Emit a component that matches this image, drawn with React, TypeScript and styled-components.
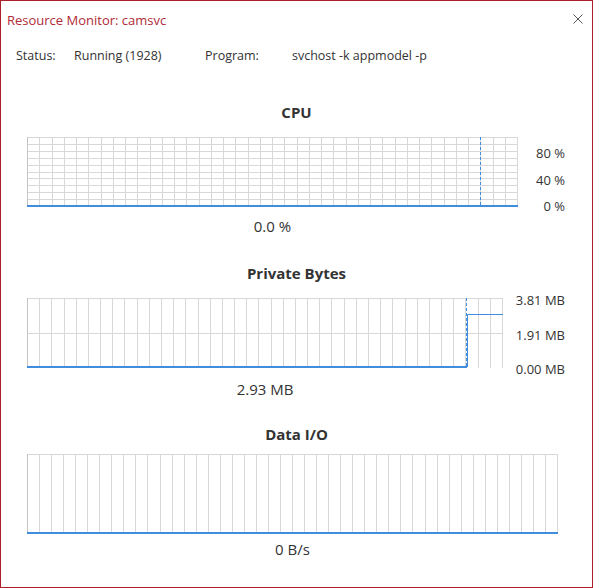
import React from 'react';
import styled, { createGlobalStyle } from 'styled-components';

const GlobalStyle = createGlobalStyle`
  html, body { margin: 0; padding: 0; background: #fff; }
  body {
    font-family: "Open Sans", "Noto Sans", "Liberation Sans", sans-serif;
    color: #333;
  }
`;

const Window = styled.div`
  box-sizing: border-box;
  width: 593px;
  height: 588px;
  border: 1px solid #ae1f2a;
  background: #fff;
  display: flex;
  flex-direction: column;
`;

const TitleBar = styled.div`
  height: 36px;
  display: flex;
  align-items: center;
  justify-content: space-between;
  padding: 0 9px 0 6px;
`;

const TitleText = styled.div`
  font-size: 13px;
  line-height: 18px;
  margin-top: 1px;
  color: #b02a36;
`;

const CloseButton = styled.div`
  width: 10px;
  height: 10px;
  display: flex;
  margin-top: -1px;
`;

const InfoRow = styled.div`
  margin-top: 10px;
  height: 18px;
  display: flex;
  align-items: center;
  padding-left: 15px;
  font-size: 12.5px;
  line-height: 18px;
  color: #333;
`;

const InfoCell = styled.div<{ $w?: number }>`
  ${(p) => (p.$w ? `width: ${p.$w}px;` : '')}
  white-space: nowrap;
`;

const Section = styled.section<{ $mt: number }>`
  margin-top: ${(p) => p.$mt}px;
  display: flex;
  flex-direction: column;
`;

const Heading = styled.h2`
  margin: 0;
  font-size: 15px;
  font-weight: 700;
  line-height: 18px;
  text-align: center;
  color: #333;
`;

const GraphRow = styled.div<{ $mt: number }>`
  margin-top: ${(p) => p.$mt}px;
  display: flex;
  padding: 0 27px 0 26px;
`;

const GraphColumn = styled.div<{ $w: number }>`
  width: ${(p) => p.$w}px;
  display: flex;
  flex-direction: column;
  align-items: center;
`;

const Value = styled.div<{ $mt: number }>`
  margin-top: ${(p) => p.$mt}px;
  font-size: 15px;
  line-height: 18px;
  color: #333;
`;

const Axis = styled.div<{ $top: number; $bottom: number; $h: number }>`
  flex: 1;
  height: ${(p) => p.$h - p.$top - p.$bottom}px;
  margin-top: ${(p) => p.$top}px;
  display: flex;
  flex-direction: column;
  justify-content: space-between;
  align-items: flex-end;
  font-size: 13px;
  line-height: 14px;
  color: #333;
`;

const AxisLabel = styled.span`
  white-space: nowrap;
`;

const GraphSvg = styled.svg`
  display: block;
  flex: none;
`;

type GraphProps = {
  width: number;
  height: number;
  cols: number;
  rows: number;
  marker?: number;
  step?: { x: number; y: number };
};

const GRID = '#d8d8d8';
const BLUE = '#3f8ddc';

function Graph({ width, height, cols, rows, marker, step }: GraphProps) {
  const vLines: number[] = [];
  for (let i = 1; i <= cols; i++) {
    vLines.push(Math.round((i * (width - 1)) / cols) + 0.5);
  }
  const hLines: number[] = [];
  for (let j = 0; j < rows; j++) {
    hLines.push(Math.round((j * (height - 1)) / rows) + 0.5);
  }
  const bottom = height - 1;
  return (
    <GraphSvg width={width} height={height} viewBox={`0 0 ${width} ${height}`}>
      <rect x={0} y={0} width={width} height={height} fill="#fff" />
      {hLines.map((y) => (
        <line key={`h${y}`} x1={0} x2={width} y1={y} y2={y} stroke={GRID} strokeWidth={1} />
      ))}
      {vLines.map((x) => (
        <line key={`v${x}`} x1={x} x2={x} y1={0} y2={height} stroke={GRID} strokeWidth={1} />
      ))}
      <line x1={0.5} x2={0.5} y1={0} y2={height} stroke="#c4c4c4" strokeWidth={1} />
      {marker !== undefined && (
        <line
          x1={marker + 0.5}
          x2={marker + 0.5}
          y1={0}
          y2={height}
          stroke={BLUE}
          strokeWidth={1}
          strokeDasharray="3 2"
        />
      )}
      {step ? (
        <>
          <line x1={0} x2={step.x} y1={bottom} y2={bottom} stroke={BLUE} strokeWidth={2} />
          <path
            d={`M${step.x + 0.5} ${bottom} V${step.y + 0.5} H${width}`}
            fill="none"
            stroke={BLUE}
            strokeWidth={1}
          />
        </>
      ) : (
        <line x1={0} x2={width} y1={bottom} y2={bottom} stroke={BLUE} strokeWidth={2} />
      )}
    </GraphSvg>
  );
}

export default function App() {
  return (
    <>
      <GlobalStyle />
      <Window>
        <TitleBar>
          <TitleText>Resource Monitor: camsvc</TitleText>
          <CloseButton>
            <svg width="10" height="10" viewBox="0 0 10 10">
              <path d="M0.5 0.5 L9.5 9.5 M9.5 0.5 L0.5 9.5" stroke="#555" strokeWidth="1" fill="none" />
            </svg>
          </CloseButton>
        </TitleBar>
        <InfoRow>
          <InfoCell $w={58}>Status:</InfoCell>
          <InfoCell $w={131}>Running (1928)</InfoCell>
          <InfoCell $w={87}>Program:</InfoCell>
          <InfoCell>svchost -k appmodel -p</InfoCell>
        </InfoRow>

        <Section $mt={38}>
          <Heading>CPU</Heading>
          <GraphRow $mt={16}>
            <GraphColumn $w={491}>
              <Graph width={491} height={70} cols={40} rows={10} marker={453} />
              <Value $mt={10}>0.0 %</Value>
            </GraphColumn>
            <Axis $h={70} $top={9} $bottom={-6}>
              <AxisLabel>80 %</AxisLabel>
              <AxisLabel>40 %</AxisLabel>
              <AxisLabel>0 %</AxisLabel>
            </Axis>
          </GraphRow>
        </Section>

        <Section $mt={29}>
          <Heading>Private Bytes</Heading>
          <GraphRow $mt={16}>
            <GraphColumn $w={476}>
              <Graph width={476} height={70} cols={39} rows={2} marker={439} step={{ x: 440, y: 16 }} />
              <Value $mt={12}>2.93 MB</Value>
            </GraphColumn>
            <Axis $h={70} $top={-5} $bottom={-8}>
              <AxisLabel>3.81 MB</AxisLabel>
              <AxisLabel>1.91 MB</AxisLabel>
              <AxisLabel>0.00 MB</AxisLabel>
            </Axis>
          </GraphRow>
        </Section>

        <Section $mt={27}>
          <Heading>Data I/O</Heading>
          <GraphRow $mt={11}>
            <GraphColumn $w={531}>
              <Graph width={531} height={80} cols={44} rows={1} />
              <Value $mt={6}>0 B/s</Value>
            </GraphColumn>
          </GraphRow>
        </Section>
      </Window>
    </>
  );
}
